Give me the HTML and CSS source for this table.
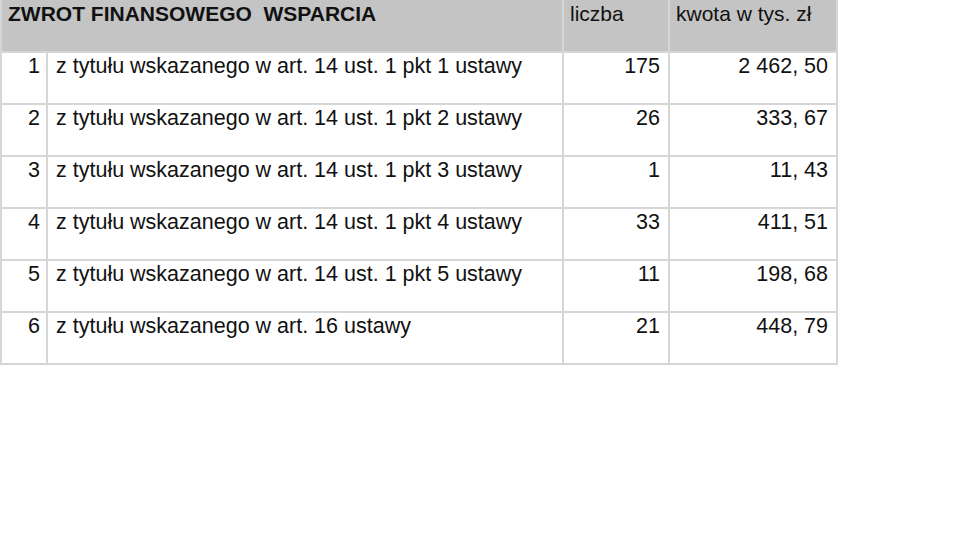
FILE: index.html
```html
<!DOCTYPE html>
<html lang="pl">
<head>
    <meta charset="UTF-8">
    <title>Zwrot finansowego wsparcia</title>
    <link rel="stylesheet" href="styles.css">
</head>
<body>
    <table class="report">
        <colgroup>
            <col class="col-no">
            <col class="col-desc">
            <col class="col-count">
            <col class="col-amount">
        </colgroup>
        <thead>
            <tr>
                <th colspan="2" class="title">ZWROT FINANSOWEGO &nbsp;WSPARCIA</th>
                <th>liczba</th>
                <th>kwota w tys. zł</th>
            </tr>
        </thead>
        <tbody>
            <tr>
                <td class="num lp">1</td>
                <td>z tytułu wskazanego w art. 14 ust. 1 pkt 1 ustawy</td>
                <td class="num">175</td>
                <td class="num">2 462, 50</td>
            </tr>
            <tr>
                <td class="num lp">2</td>
                <td>z tytułu wskazanego w art. 14 ust. 1 pkt 2 ustawy</td>
                <td class="num">26</td>
                <td class="num">333, 67</td>
            </tr>
            <tr>
                <td class="num lp">3</td>
                <td>z tytułu wskazanego w art. 14 ust. 1 pkt 3 ustawy</td>
                <td class="num">1</td>
                <td class="num">11, 43</td>
            </tr>
            <tr>
                <td class="num lp">4</td>
                <td>z tytułu wskazanego w art. 14 ust. 1 pkt 4 ustawy</td>
                <td class="num">33</td>
                <td class="num">411, 51</td>
            </tr>
            <tr>
                <td class="num lp">5</td>
                <td>z tytułu wskazanego w art. 14 ust. 1 pkt 5 ustawy</td>
                <td class="num">11</td>
                <td class="num">198, 68</td>
            </tr>
            <tr>
                <td class="num lp">6</td>
                <td>z tytułu wskazanego w art. 16 ustawy</td>
                <td class="num">21</td>
                <td class="num">448, 79</td>
            </tr>
        </tbody>
    </table>
</body>
</html>
```

FILE: styles.css
```css
body {
    margin: 0;
    background: #fff;
    font-family: "Liberation Sans", Arial, sans-serif;
    color: #111;
}
.report {
    border-collapse: separate;
    border-spacing: 0;
    table-layout: fixed;
    width: 838px;
    border-left: 2px solid #d6d6d6;
}
.col-no {
    width: 46px;
}
.col-desc {
    width: 516px;
}
.col-count {
    width: 106px;
}
.col-amount {
    width: 168px;
}
th, td {
    border-right: 2px solid #d6d6d6;
    border-bottom: 2px solid #d6d6d6;
    padding: 1px 8px 0 8px;
    vertical-align: top;
    text-align: left;
    line-height: 24px;
}
th {
    background: #c4c4c4;
    font-weight: normal;
    font-size: 21px;
    height: 49px;
    padding-top: 2px;
    padding-left: 6px;
}
th.title {
    font-weight: bold;
    white-space: nowrap;
}
td {
    font-size: 21.5px;
    height: 49px;
    white-space: nowrap;
}
td.num {
    text-align: right;
}
td.lp {
    padding-right: 6px;
}
```
